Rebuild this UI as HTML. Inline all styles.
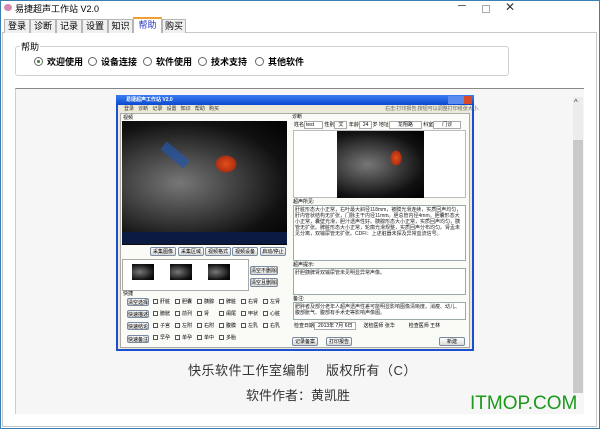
<!DOCTYPE html>
<html><head><meta charset="utf-8"><style>
*{margin:0;padding:0;box-sizing:border-box}
body{width:600px;height:429px;background:#fff;position:relative;overflow:hidden;font-family:"Liberation Sans","Noto Sans CJK SC",sans-serif;font-size:11px;color:#000}
.a{position:absolute}
.tab{position:absolute;top:19px;height:14px;border:1px solid #b5b5b5;border-bottom:none;background:#f0f0f0;font-size:9px;text-align:center;line-height:13px}
.rd{position:absolute;top:56px;font-size:9px;font-weight:bold;line-height:12px;white-space:nowrap}
.rd i{display:inline-block;width:9px;height:9px;border:1px solid #666;border-radius:50%;vertical-align:-1px;margin-right:4px;background:#fff;position:relative}
.s{font-size:5px;line-height:6px;white-space:nowrap}
.btn{position:absolute;background:linear-gradient(#fff,#dcdcdc);border:1px solid #7a8aa0;border-radius:2px;font-size:5px;text-align:center;line-height:8px;white-space:nowrap;overflow:hidden}
.us{position:absolute;background:radial-gradient(ellipse at 35% 50%,#777 0%,#444 35%,#111 70%,#000 100%)}
.ta{position:absolute;background:#fff;border:1px solid #9aa;font-size:5px;line-height:6px;padding:1px;color:#222;overflow:hidden}
.cb{display:inline-block;width:5px;height:5px;border:1px solid #555;margin-right:2px;vertical-align:middle}
.grid{position:absolute;left:153px;top:298px;display:grid;grid-template-columns:repeat(6,22px);grid-auto-rows:12px;font-size:5px;line-height:8px;white-space:nowrap}
</style></head><body>
<div class="a" style="left:0;top:0;width:600px;height:429px;border:1px solid #3c7fb1"></div>
<div class="a" style="left:4px;top:4px;width:8px;height:7px;background:#d48ab0;border-radius:50%"></div>
<div class="a" style="left:15px;top:2px;font-size:9px">易捷超声工作站 V2.0</div>
<div class="a" style="left:458px;top:0;font-size:11px;color:#333">─</div>
<div class="a" style="left:482px;top:5px;width:8px;height:8px;border:1px solid #aaa"></div>
<div class="a" style="left:505px;top:0;font-size:12px;color:#333">✕</div>
<div class="a" style="left:2px;top:32px;width:595px;height:395px;border:1px solid #c8c8c8;background:#fff"></div>
<div class="tab" style="left:4px;width:26px">登录</div>
<div class="tab" style="left:30px;width:26px">诊断</div>
<div class="tab" style="left:56px;width:26px">记录</div>
<div class="tab" style="left:82px;width:26px">设置</div>
<div class="tab" style="left:108px;width:25px">知识</div>
<div class="tab" style="left:133px;width:29px;top:17px;height:16px;background:#fff;border-top:2px solid #f0a030;color:#2030c0">帮助</div>
<div class="tab" style="left:162px;width:24px">购买</div>
<div class="a" style="left:15px;top:46px;width:494px;height:30px;border:1px solid #d0d0d0;border-radius:3px"></div>
<div class="a" style="left:20px;top:40px;font-size:9px;background:#fff;padding:0 1px">帮助</div>
<div class="rd" style="left:34px"><i><b style="position:absolute;left:2px;top:2px;width:3px;height:3px;border-radius:50%;background:#2a8a2a"></b></i>欢迎使用</div>
<div class="rd" style="left:88px"><i></i>设备连接</div>
<div class="rd" style="left:143px"><i></i>软件使用</div>
<div class="rd" style="left:198px"><i></i>技术支持</div>
<div class="rd" style="left:255px"><i></i>其他软件</div>
<div class="a" style="left:15px;top:88px;width:569px;height:326px;border-top:1px solid #888;border-left:1px solid #ccc;background:#f6f6f6"></div>
<div class="a" style="left:573px;top:97px;width:10px;height:296px;background:#ececec"></div>
<div class="a" style="left:574px;top:98px;font-size:8px;color:#333">^</div>
<div class="a" style="left:573px;top:140px;width:10px;height:253px;background:#c9c9c9"></div>

<div class="a" style="left:116px;top:95px;width:358px;height:256px;background:#ece9d8;border:2px solid #1c4fd0;border-top:none"></div>
<div class="a" style="left:116px;top:95px;width:358px;height:10px;background:linear-gradient(#3d7df0,#0a4ad0);color:#fff;font-size:5px;line-height:10px;padding-left:10px;font-weight:bold">易捷超声工作站 V2.0</div>
<div class="a" style="left:448px;top:96px;width:24px;height:8px;background:linear-gradient(90deg,#5a8cf0 66%,#d84a2a 66%)"></div>
<div class="a s" style="left:124px;top:106px;color:#333">登录 &nbsp; 诊断 &nbsp; 记录 &nbsp; 设置 &nbsp; 知识 &nbsp; 帮助 &nbsp; 购买</div>
<div class="a s" style="left:385px;top:106px;color:#666">右击:打印报告;按钮可以调整打印纸张大小.</div>
<div class="a" style="left:120px;top:113px;width:350px;height:235px;background:#fafaf6;border:1px solid #aaa"></div>
<div class="a s" style="left:123px;top:115px">视频</div>
<div class="us" style="left:122px;top:121px;width:165px;height:124px"></div>
<div class="a" style="left:160px;top:150px;width:30px;height:10px;background:#2456a8;opacity:.7;transform:rotate(40deg)"></div>
<div class="a" style="left:215px;top:155px;width:22px;height:18px;background:radial-gradient(#e0501a,#b43010 60%,transparent 70%)"></div>
<div class="a" style="left:122px;top:232px;width:165px;height:12px;background:#0a1a40"></div>
<div class="btn" style="left:150px;top:247px;width:26px;height:9px">采集图像</div>
<div class="btn" style="left:178px;top:247px;width:26px;height:9px">采集区域</div>
<div class="btn" style="left:205px;top:247px;width:26px;height:9px">视频格式</div>
<div class="btn" style="left:232px;top:247px;width:26px;height:9px">视频设备</div>
<div class="btn" style="left:260px;top:247px;width:26px;height:9px">启动/停止</div>
<div class="a" style="left:122px;top:259px;width:127px;height:32px;background:#fff;border:1px solid #aaa"></div>
<div class="us" style="left:132px;top:264px;width:22px;height:16px"></div>
<div class="us" style="left:170px;top:264px;width:22px;height:16px"></div>
<div class="us" style="left:208px;top:264px;width:22px;height:16px"></div>
<div class="btn" style="left:250px;top:266px;width:28px;height:9px">清空不删除图片</div>
<div class="btn" style="left:250px;top:278px;width:28px;height:9px">清空且删除图片</div>
<div class="a s" style="left:123px;top:291px">快捷</div>
<div class="btn" style="left:127px;top:298px;width:22px;height:8px">清空选择</div>
<div class="btn" style="left:127px;top:310px;width:22px;height:8px">快速描述</div>
<div class="btn" style="left:127px;top:322px;width:22px;height:8px">快速结论</div>
<div class="btn" style="left:127px;top:335px;width:22px;height:8px">快速备注</div>
<div class="grid">
<span><i class="cb"></i>肝脏</span><span><i class="cb"></i>胆囊</span><span><i class="cb"></i>胰腺</span><span><i class="cb"></i>脾脏</span><span><i class="cb"></i>右肾</span><span><i class="cb"></i>左肾</span>
<span><i class="cb"></i>膀胱</span><span><i class="cb"></i>前列</span><span><i class="cb"></i>肾</span><span><i class="cb"></i>阑尾</span><span><i class="cb"></i>甲状</span><span><i class="cb"></i>心脏</span>
<span><i class="cb"></i>子宫</span><span><i class="cb"></i>左附</span><span><i class="cb"></i>右附</span><span><i class="cb"></i>腹膜</span><span><i class="cb"></i>左乳</span><span><i class="cb"></i>右乳</span>
<span><i class="cb"></i>早孕</span><span><i class="cb"></i>单孕</span><span><i class="cb"></i>单中</span><span><i class="cb"></i>多胎</span>
</div>
<div class="a s" style="left:292px;top:114px">诊断</div>
<div class="a s" style="left:294px;top:122px">姓名<span style="background:#fff;border:1px solid #aaa;padding:0 8px 0 1px">test</span> 性别<span style="background:#fff;border:1px solid #aaa;padding:0 3px">文</span> 年龄<span style="background:#fff;border:1px solid #aaa;padding:0 3px">24</span>岁 地址<span style="background:#fff;border:1px solid #aaa;padding:0 8px">龙翔路</span> 科室<span style="background:#fff;border:1px solid #aaa;padding:0 8px">门诊</span></div>
<div class="a" style="left:293px;top:130px;width:173px;height:68px;background:#fff;border:1px solid #bbb"></div>
<div class="us" style="left:337px;top:131px;width:87px;height:67px"></div>
<div class="a" style="left:390px;top:150px;width:12px;height:16px;background:radial-gradient(#e0501a,#b43010 60%,transparent 70%)"></div>
<div class="a s" style="left:293px;top:199px">超声所见:</div>
<div class="ta" style="left:293px;top:205px;width:173px;height:56px">肝脏形态大小正常，右叶最大斜径118mm，被膜光滑连续，实质回声均匀，肝内管状结构无扩张，门脉主干内径11mm。胆总管内径4mm。胆囊形态大小正常，囊壁光滑，胆汁透声性好。胰腺形态大小正常，实质回声均匀，胰管无扩张。脾脏形态大小正常，轮廓光滑规整，实质回声分布均匀。肾盂未见分离，双输尿管无扩张。CDFI：上述脏器未探及异常血流信号。</div>
<div class="a s" style="left:293px;top:262px">超声提示:</div>
<div class="ta" style="left:293px;top:268px;width:173px;height:27px">肝胆胰脾肾双输尿管未见明显异常声像。</div>
<div class="a s" style="left:293px;top:296px">备注:</div>
<div class="ta" style="left:293px;top:302px;width:173px;height:18px">肥胖者及部分老年人超声透声性差可能明显影响图像清晰度。消瘦、幼儿、腹部胀气、腹部有手术史等影响声像图。</div>
<div class="a s" style="left:294px;top:323px">检查日期<span style="background:#fff;border:1px solid #aaa;padding:0 3px">2013年 7月 6日</span> &nbsp;&nbsp;&nbsp; 送检医师 张华 &nbsp;&nbsp;&nbsp;&nbsp;&nbsp;&nbsp;&nbsp;&nbsp; 检查医师 王林</div>
<div class="btn" style="left:292px;top:337px;width:26px;height:9px">记录备案</div>
<div class="btn" style="left:326px;top:337px;width:26px;height:9px">打印报告</div>
<div class="btn" style="left:439px;top:337px;width:26px;height:9px">新建</div>

<div class="a" style="left:188px;top:360px;font-size:13px;color:#333;letter-spacing:0.5px">快乐软件工作室编制 &nbsp;&nbsp;&nbsp;版权所有（C）</div>
<div class="a" style="left:246px;top:385px;font-size:13px;color:#333">软件作者：黄凯胜</div>
<div class="a" style="left:470px;top:393px;font-size:19px;color:#1a9a1a;font-family:'Liberation Sans',sans-serif">ITMOP.COM</div>
</body></html>
